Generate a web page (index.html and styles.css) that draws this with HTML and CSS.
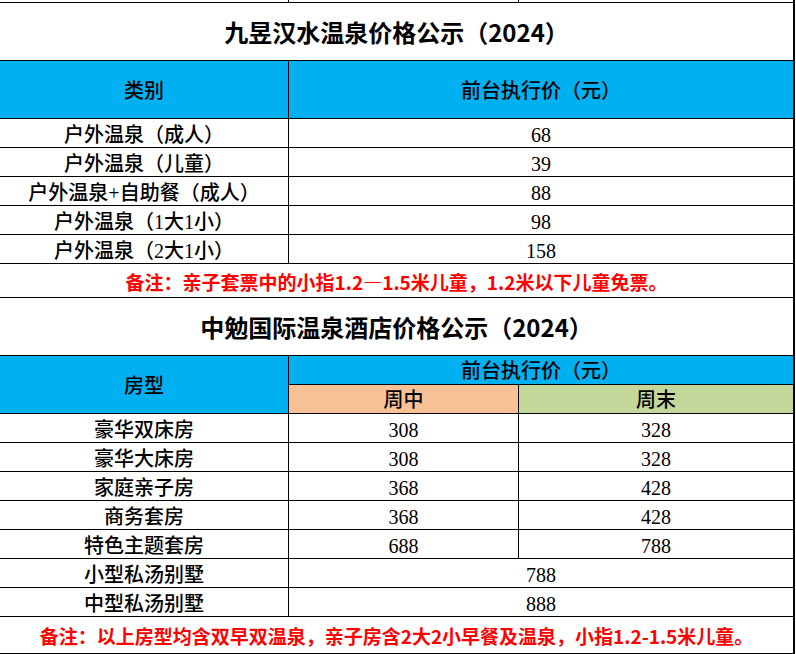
FILE: index.html
```html
<!DOCTYPE html>
<html lang="zh-CN">
<head>
<meta charset="utf-8">
<title>温泉价格公示</title>
<link rel="stylesheet" href="styles.css">
</head>
<body>
<table class="sheet">
  <colgroup><col class="c1"><col class="c2"><col class="c3"></colgroup>
  <tr class="strip"><td></td><td></td><td></td></tr>
  <tr class="title"><td colspan="3">九昱汉水温泉价格公示（2024）</td></tr>
  <tr class="head tall"><th>类别</th><th colspan="2">前台执行价（元）</th></tr>
  <tr class="row"><td>户外温泉（成人）</td><td colspan="2">68</td></tr>
  <tr class="row"><td>户外温泉（儿童）</td><td colspan="2">39</td></tr>
  <tr class="row"><td>户外温泉+自助餐（成人）</td><td colspan="2">88</td></tr>
  <tr class="row"><td>户外温泉（1大1小）</td><td colspan="2">98</td></tr>
  <tr class="row"><td>户外温泉（2大1小）</td><td colspan="2">158</td></tr>
  <tr class="note n1"><td colspan="3">备注：亲子套票中的小指1.2—1.5米儿童，1.2米以下儿童免票。</td></tr>
  <tr class="title"><td colspan="3">中勉国际温泉酒店价格公示（2024）</td></tr>
  <tr class="head"><th rowspan="2">房型</th><th colspan="2">前台执行价（元）</th></tr>
  <tr class="head sub"><th class="mid">周中</th><th class="end">周末</th></tr>
  <tr class="row"><td>豪华双床房</td><td>308</td><td>328</td></tr>
  <tr class="row"><td>豪华大床房</td><td>308</td><td>328</td></tr>
  <tr class="row"><td>家庭亲子房</td><td>368</td><td>428</td></tr>
  <tr class="row"><td>商务套房</td><td>368</td><td>428</td></tr>
  <tr class="row"><td>特色主题套房</td><td>688</td><td>788</td></tr>
  <tr class="row"><td>小型私汤别墅</td><td colspan="2">788</td></tr>
  <tr class="row"><td>中型私汤别墅</td><td colspan="2">888</td></tr>
  <tr class="note n2"><td colspan="3">备注：以上房型均含双早双温泉，亲子房含2大2小早餐及温泉，小指1.2-1.5米儿童。</td></tr>
</table>
</body>
</html>
```

FILE: styles.css
```css
html, body {
  margin: 0;
  padding: 0;
  background: #ffffff;
}

.sheet {
  border-collapse: separate;
  border-spacing: 0;
  table-layout: fixed;
  width: 795px;
  border-right: 2px solid #000;
  font-family: "Liberation Serif", "Noto Sans CJK SC", serif;
  font-size: 20px;
  color: #000;
}

.c1 { width: 289px; }
.c2 { width: 230px; }
.c3 { width: 274px; }

.sheet td,
.sheet th {
  padding: 0;
  border-right: 1px solid #000;
  border-bottom: 1px solid #000;
  text-align: center;
  vertical-align: middle;
  font-weight: 500;
  white-space: nowrap;
  line-height: 1;
}

.sheet td:last-child,
.sheet th:last-child {
  border-right: none;
}

.strip { height: 3px; }
.strip td { font-size: 0; }

.title { height: 58px; }
.sheet .title td {
  font-family: "Noto Sans CJK SC", sans-serif;
  font-weight: 700;
  font-size: 24px;
}

.head { height: 29px; }
.head.tall { height: 58px; }
.head th {
  background: #00b0f0;
  padding-top: 2px;
}
.head .mid { background: #f8c195; }
.head .end { background: #c4d79b; border-right: none; }
.sub .mid { border-right: 1px solid #000; }

.row { height: 29px; }
.row td { padding-top: 3px; }

.sheet .note td {
  font-family: "Noto Sans CJK SC", sans-serif;
  font-weight: 700;
  font-size: 19px;
  color: #ff0000;
  padding-top: 1px;
}
.n1 { height: 34px; }
.n2 { height: 37px; }
```
